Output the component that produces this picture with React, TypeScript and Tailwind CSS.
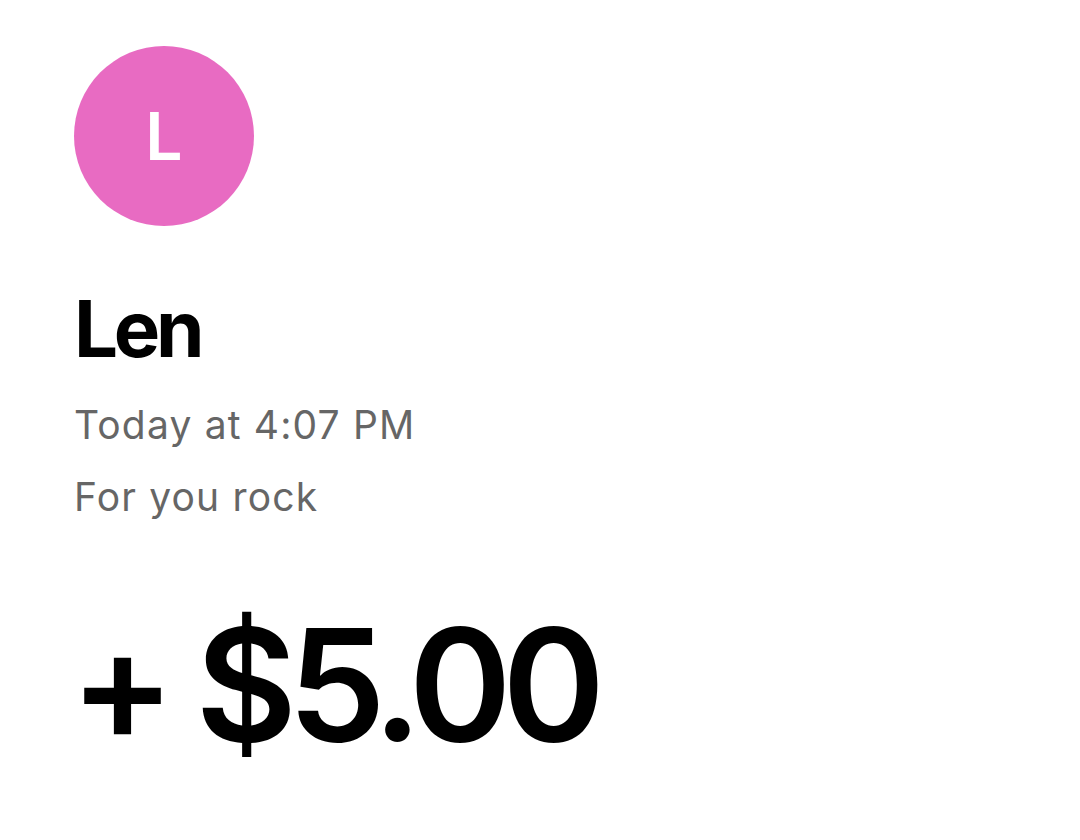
export default function App() {
  return (
    <div className="w-[1080px] h-[840px] bg-white pl-[74px] pt-[46px] font-['Inter','Liberation_Sans',sans-serif]">
      <div className="flex items-center justify-center w-[180px] h-[180px] rounded-full bg-[#e86bc2]">
        <span className="text-[66px] font-semibold text-white leading-none">L</span>
      </div>
      <h1 className="mt-[64px] text-[78px] font-bold leading-none tracking-[-0.055em] text-black">
        Len
      </h1>
      <div className="mt-[31px] flex flex-col gap-[20px] text-[39px] leading-[52px] text-[#666666] tracking-[0.03em]">
        <p>Today at 4:07 PM</p>
        <p>For you rock</p>
      </div>
      <p className="mt-[84px] -ml-[4px] text-[156px] font-semibold leading-none tracking-[-0.06em] text-black">
        + $5.00
      </p>
    </div>
  );
}
